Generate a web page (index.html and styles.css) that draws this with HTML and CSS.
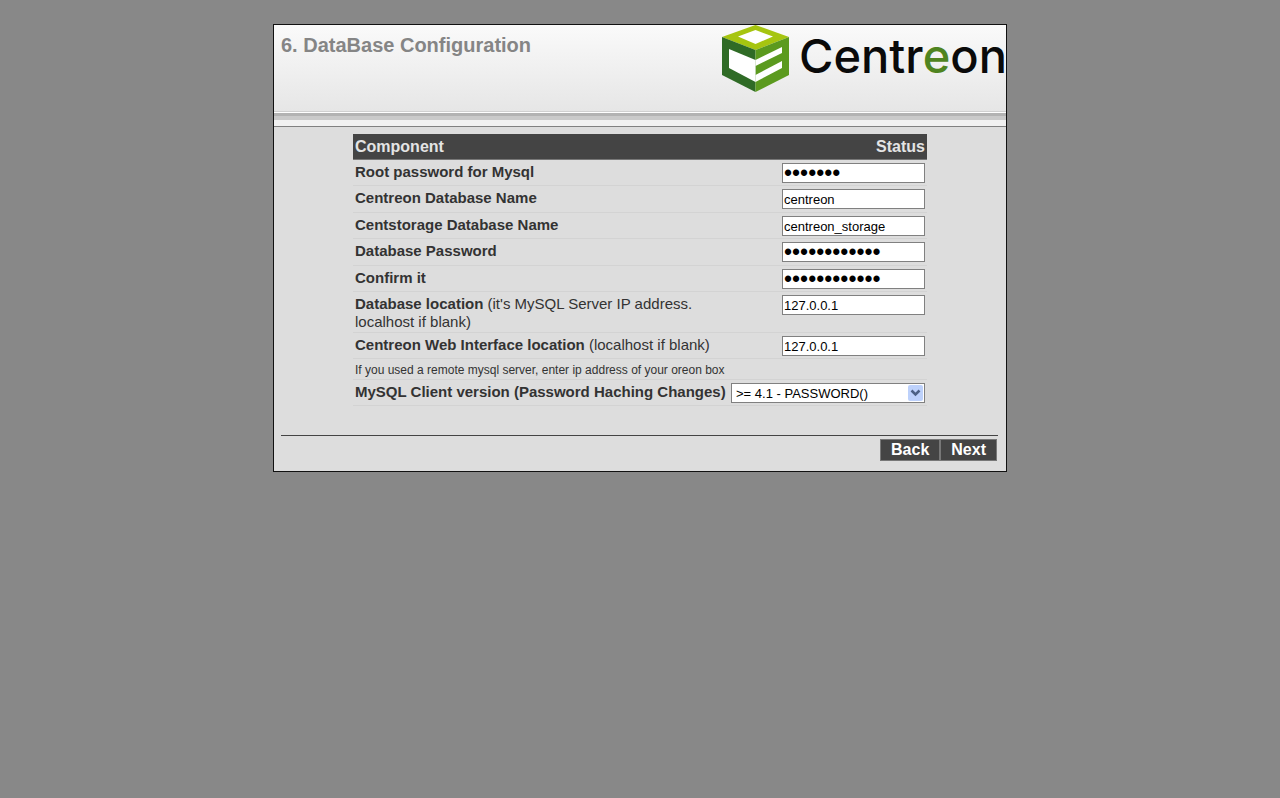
FILE: index.html
```html
<!DOCTYPE html>
<html lang="en">
<head>
<meta charset="utf-8">
<title>Centreon Setup</title>
<link rel="stylesheet" href="styles.css">
</head>
<body>
<form class="wizard" autocomplete="off">
  <header class="wizard-head">
    <h1 class="title">6. DataBase Configuration</h1>
    <svg class="logo" viewBox="0 0 285 70" role="img" aria-label="Centreon">
      <polygon fill="#a6c510" points="34.5,0 68,12 34.5,25 1,12"/>
      <polygon fill="#fff" points="34.5,5 52,11.500 34.5,19 17,11.500"/>
      <polygon fill="#2f6b26" points="1,12 34.500,25 34.500,67 1,50"/>
      <polygon fill="#5b9a1e" points="68,12 34.500,25 34.500,67 68,50"/>
      <polygon fill="#fff" points="8,24 34.500,35 34.500,57 8,43"/>
      <polygon fill="#fff" points="34.500,35 61,22 61,28 34.500,41"/>
      <polygon fill="#fff" points="34.500,50 61,36 61,43 34.500,57"/>
      <text class="logo-text" x="78" y="48">Centr<tspan class="logo-accent">e</tspan>on</text>
    </svg>
  </header>
  <main class="wizard-body">
    <table class="fields">
      <thead>
        <tr><th scope="col">Component</th><th scope="col" class="status">Status</th></tr>
      </thead>
      <tbody>
        <tr><td><label for="root"><b>Root password for Mysql</b></label></td><td class="value"><input class="box secret" id="root" type="password" value="rootpwd"></td></tr>
        <tr><td><label for="db"><b>Centreon Database Name</b></label></td><td class="value"><input class="box" id="db" type="text" value="centreon"></td></tr>
        <tr><td><label for="storage"><b>Centstorage Database Name</b></label></td><td class="value"><input class="box" id="storage" type="text" value="centreon_storage"></td></tr>
        <tr><td><label for="pwd"><b>Database Password</b></label></td><td class="value"><input class="box secret" id="pwd" type="password" value="databasepass"></td></tr>
        <tr><td><label for="confirm"><b>Confirm it</b></label></td><td class="value"><input class="box secret" id="confirm" type="password" value="databasepass"></td></tr>
        <tr><td><label for="loc"><b>Database location</b> (it's MySQL Server IP address. localhost if blank)</label></td><td class="value"><input class="box" id="loc" type="text" value="127.0.0.1"></td></tr>
        <tr><td><label for="web"><b>Centreon Web Interface location</b> (localhost if blank)</label></td><td class="value"><input class="box" id="web" type="text" value="127.0.0.1"></td></tr>
        <tr class="note"><td colspan="2">If you used a remote mysql server, enter ip address of your oreon box</td></tr>
        <tr><td><label for="client"><b>MySQL Client version (Password Haching Changes)</b></label></td><td class="value">
          <div class="select-wrap"><select class="box select" id="client"><option>&gt;= 4.1 - PASSWORD()</option><option>3.x - OLD_PASSWORD()</option></select><svg class="arrow" viewBox="0 0 15 16" aria-hidden="true"><rect width="15" height="16" rx="2" fill="#bdd1fb"/><path d="M3.500 5.500l4 4 4-4" fill="none" stroke="#4d6185" stroke-width="2.500"/></svg></div>
        </td></tr>
      </tbody>
    </table>
  </main>
  <footer class="wizard-foot">
    <button class="btn" type="button">Back</button><button class="btn" type="button">Next</button>
  </footer>
</form>
</body>
</html>
```
FILE: styles.css
```css
* { box-sizing: border-box; }
body {
  margin: 0;
  padding: 24px 16px;
  background: #888;
  color: #333;
  font-family: "Liberation Sans", Arial, sans-serif;
  font-size: 15px;
}
.wizard {
  max-width: 734px;
  margin: 0 auto;
  border: 1px solid #111;
  background: #ddd;
}
.wizard-head {
  display: flex;
  justify-content: space-between;
  min-height: 102px;
  overflow: hidden;
  border-bottom: 1px solid #808080;
  background: linear-gradient(#fafafa 0, #e6e6e6 86px, #d0d0d0 86px, #d0d0d0 87px, #fff 87px, #fff 88px, #b3b3b3 88px, #b3b3b3 91px, #cacaca 91px, #cacaca 95px, #f1f1f1 95px);
}
.title {
  margin: 0;
  padding: 8px 7px;
  font-size: 20px;
  line-height: 24px;
  color: #858585;
}
.logo { flex: none; width: 285px; height: 70px; }
.logo-text { font-family: Inter, sans-serif; font-size: 47px; font-weight: 500; fill: #0a0a0a; }
.logo-accent { fill: #4f8420; }
.wizard-body { padding: 7px 8px 29px; }
.fields {
  width: 100%;
  max-width: 574px;
  margin: 0 auto;
  border-collapse: separate;
  border-spacing: 0;
}
.fields th {
  height: 26px;
  padding: 0 2px;
  border-bottom: 1px solid #777;
  background: #444;
  color: #e4e4e4;
  font-size: 16px;
  line-height: 24px;
  text-align: left;
}
.fields th.status { width: 198px; text-align: right; }
.fields td {
  height: 26px;
  padding: 3px 2px 1px;
  border-bottom: 1px solid #d3d3d3;
  line-height: 18px;
  vertical-align: top;
}
.fields tr:nth-child(even) td { height: 27px; }
.fields tr.note td { height: 21px; padding: 3px 2px 0; font-size: 12px; line-height: 17px; }
.box {
  display: block;
  width: 143px;
  height: 20px;
  margin-left: auto;
  padding: 0 1px;
  border: 1px solid #808080;
  border-radius: 0;
  background: #fff;
  color: #000;
  font: 13px "Liberation Sans", Arial, sans-serif;
}
.secret { padding-top: 1px; font-size: 23px; }
.fields td.value { padding-bottom: 0; }
.select-wrap { position: relative; }
.select { width: 194px; padding: 0 20px 0 4px; appearance: none; }
.arrow { position: absolute; top: 2px; right: 2px; width: 15px; height: 16px; pointer-events: none; }
.wizard-foot {
  display: flex;
  justify-content: flex-end;
  margin: 0 8px 0 7px;
  padding: 3px 1px 10px;
  border-top: 1px solid #444;
}
.btn {
  height: 22px;
  padding: 0 10px;
  border: 1px solid #777;
  background: #444;
  color: #fff;
  font: bold 16px "Liberation Sans", Arial, sans-serif;
}
```
